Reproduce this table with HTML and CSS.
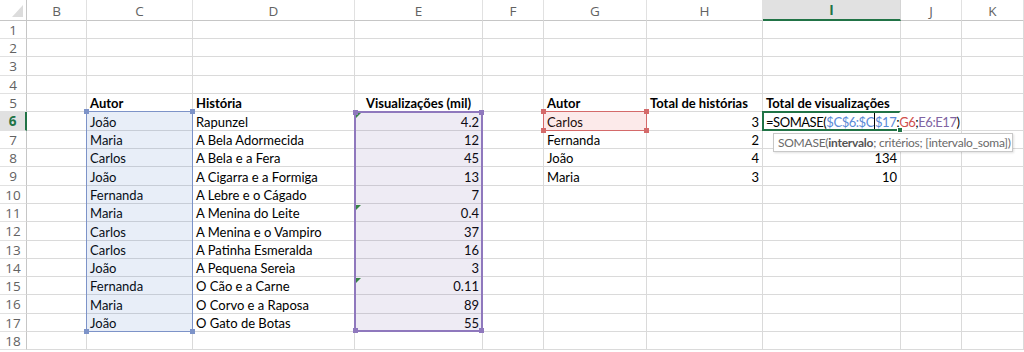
FILE: index.html
```html
<!DOCTYPE html>
<html lang="pt">
<head>
<meta charset="utf-8">
<title>SOMASE</title>
<link rel="stylesheet" href="styles.css">
</head>
<body>
<div class="sheet">
  <!-- header row -->
  <div class="corner"><span class="corner-tri"></span></div>
  <div class="ch">B</div><div class="ch">C</div><div class="ch">D</div><div class="ch">E</div><div class="ch">F</div><div class="ch">G</div><div class="ch">H</div><div class="ch ch-active">I</div><div class="ch">J</div><div class="ch">K</div>

  <!-- row 1 -->
  <div class="rh">1</div><div class="c"></div><div class="c"></div><div class="c"></div><div class="c"></div><div class="c"></div><div class="c"></div><div class="c"></div><div class="c"></div><div class="c"></div><div class="c"></div>
  <!-- row 2 -->
  <div class="rh">2</div><div class="c"></div><div class="c"></div><div class="c"></div><div class="c"></div><div class="c"></div><div class="c"></div><div class="c"></div><div class="c"></div><div class="c"></div><div class="c"></div>
  <!-- row 3 -->
  <div class="rh">3</div><div class="c"></div><div class="c"></div><div class="c"></div><div class="c"></div><div class="c"></div><div class="c"></div><div class="c"></div><div class="c"></div><div class="c"></div><div class="c"></div>
  <!-- row 4 -->
  <div class="rh">4</div><div class="c"></div><div class="c"></div><div class="c"></div><div class="c"></div><div class="c"></div><div class="c"></div><div class="c"></div><div class="c"></div><div class="c"></div><div class="c"></div>
  <!-- row 5 -->
  <div class="rh">5</div><div class="c"></div><div class="c b">Autor</div><div class="c b">História</div><div class="c b ctr">Visualizações (mil)</div><div class="c"></div><div class="c b">Autor</div><div class="c b">Total de histórias</div><div class="c b">Total de visualizações</div><div class="c"></div><div class="c"></div>
  <!-- row 6 -->
  <div class="rh rh-active">6</div><div class="c"></div><div class="c">João</div><div class="c">Rapunzel</div><div class="c n"><span class="err"></span>4.2</div><div class="c"></div><div class="c">Carlos</div><div class="c n">3</div><div class="c formula">=SOMASE(<span class="ref-c">$C$6:$C</span><span class="caret"></span><span class="ref-c">$17</span>;<span class="ref-g">G6</span>;<span class="ref-e">E6:E17</span>)</div><div class="c"></div><div class="c"></div>
  <!-- row 7 -->
  <div class="rh">7</div><div class="c"></div><div class="c">Maria</div><div class="c">A Bela Adormecida</div><div class="c n">12</div><div class="c"></div><div class="c">Fernanda</div><div class="c n">2</div><div class="c"></div><div class="c"></div><div class="c"></div>
  <!-- row 8 -->
  <div class="rh">8</div><div class="c"></div><div class="c">Carlos</div><div class="c">A Bela e a Fera</div><div class="c n">45</div><div class="c"></div><div class="c">João</div><div class="c n">4</div><div class="c n">134</div><div class="c"></div><div class="c"></div>
  <!-- row 9 -->
  <div class="rh">9</div><div class="c"></div><div class="c">João</div><div class="c">A Cigarra e a Formiga</div><div class="c n">13</div><div class="c"></div><div class="c">Maria</div><div class="c n">3</div><div class="c n">10</div><div class="c"></div><div class="c"></div>
  <!-- row 10 -->
  <div class="rh">10</div><div class="c"></div><div class="c">Fernanda</div><div class="c">A Lebre e o Cágado</div><div class="c n">7</div><div class="c"></div><div class="c"></div><div class="c"></div><div class="c"></div><div class="c"></div><div class="c"></div>
  <!-- row 11 -->
  <div class="rh">11</div><div class="c"></div><div class="c">Maria</div><div class="c">A Menina do Leite</div><div class="c n"><span class="err"></span>0.4</div><div class="c"></div><div class="c"></div><div class="c"></div><div class="c"></div><div class="c"></div><div class="c"></div>
  <!-- row 12 -->
  <div class="rh">12</div><div class="c"></div><div class="c">Carlos</div><div class="c">A Menina e o Vampiro</div><div class="c n">37</div><div class="c"></div><div class="c"></div><div class="c"></div><div class="c"></div><div class="c"></div><div class="c"></div>
  <!-- row 13 -->
  <div class="rh">13</div><div class="c"></div><div class="c">Carlos</div><div class="c">A Patinha Esmeralda</div><div class="c n">16</div><div class="c"></div><div class="c"></div><div class="c"></div><div class="c"></div><div class="c"></div><div class="c"></div>
  <!-- row 14 -->
  <div class="rh">14</div><div class="c"></div><div class="c">João</div><div class="c">A Pequena Sereia</div><div class="c n">3</div><div class="c"></div><div class="c"></div><div class="c"></div><div class="c"></div><div class="c"></div><div class="c"></div>
  <!-- row 15 -->
  <div class="rh">15</div><div class="c"></div><div class="c">Fernanda</div><div class="c">O Cão e a Carne</div><div class="c n"><span class="err"></span>0.11</div><div class="c"></div><div class="c"></div><div class="c"></div><div class="c"></div><div class="c"></div><div class="c"></div>
  <!-- row 16 -->
  <div class="rh">16</div><div class="c"></div><div class="c">Maria</div><div class="c">O Corvo e a Raposa</div><div class="c n">89</div><div class="c"></div><div class="c"></div><div class="c"></div><div class="c"></div><div class="c"></div><div class="c"></div>
  <!-- row 17 -->
  <div class="rh">17</div><div class="c"></div><div class="c">João</div><div class="c">O Gato de Botas</div><div class="c n">55</div><div class="c"></div><div class="c"></div><div class="c"></div><div class="c"></div><div class="c"></div><div class="c"></div>
  <!-- row 18 -->
  <div class="rh">18</div><div class="c"></div><div class="c"></div><div class="c"></div><div class="c"></div><div class="c"></div><div class="c"></div><div class="c"></div><div class="c"></div><div class="c"></div><div class="c"></div>

  <!-- range highlights (overlays) -->
  <div class="range range-c"><i class="h tl"></i><i class="h tr"></i><i class="h bl"></i><i class="h br"></i></div>
  <div class="range range-e"><i class="h tl"></i><i class="h tr"></i><i class="h bl"></i><i class="h br"></i></div>
  <div class="range range-g"><i class="h tl"></i><i class="h tr"></i><i class="h bl"></i><i class="h br"></i></div>
  <div class="active-cell"><i class="fh"></i></div>

  <div class="tooltip">SOMASE(<b>intervalo</b>; critérios; [intervalo_soma])</div>
</div>
</body>
</html>
```

FILE: styles.css
```css
* { box-sizing: border-box; }

html, body {
  margin: 0;
  padding: 0;
  background: #ffffff;
}

body {
  font-family: Lato, "Open Sans", "Liberation Sans", sans-serif;
  font-size: 13px;
  color: #000;
  overflow: hidden;
  width: 1024px;
  height: 352px;
}

.sheet {
  position: relative;
  display: grid;
  grid-template-columns: 27px 60px 106px 162px 128px 61px 103px 116px 138px 61px 62px;
  grid-template-rows: 21px 18px 18px 19px 18px 18px 19px 18px 18px 19px 18px 18px 19px 18px 18px 18px 19px 18px 18px;
}

/* headers */
.corner {
  position: relative;
  border-right: 1px solid #c6c6c6;
  border-bottom: 1px solid #c6c6c6;
}
.corner-tri {
  position: absolute;
  right: 3px;
  bottom: 3px;
  width: 0;
  height: 0;
  border-left: 11px solid transparent;
  border-bottom: 12px solid #dcdcdc;
}

.ch {
  display: flex;
  align-items: center;
  justify-content: center;
  color: #626262;
  font-family: "Open Sans", Lato, sans-serif;
  font-size: 13.5px;
  border-right: 1px solid #e1e1e1;
  border-bottom: 1px solid #c6c6c6;
  padding-top: 1px;
}
.ch-active {
  background: #e1e1e1;
  color: #217346;
  font-weight: 700;
  border-bottom: 2px solid #217346;
  border-right-color: #d4d4d4;
}

.rh {
  display: flex;
  align-items: center;
  justify-content: center;
  color: #626262;
  font-family: "Open Sans", Lato, sans-serif;
  font-size: 13.5px;
  border-right: 1px solid #c6c6c6;
  border-bottom: 1px solid #e1e1e1;
}
.rh-active {
  background: #e1e1e1;
  color: #217346;
  font-weight: 700;
  border-right: 2px solid #217346;
}

/* cells */
.c {
  display: flex;
  align-items: center;
  padding: 1px 3px 0 3px;
  border-right: 1px solid #dadada;
  border-bottom: 1px solid #dadada;
  white-space: nowrap;
  position: relative;
  min-width: 0;
}
.b { font-weight: 700; }
.ctr { justify-content: center; }
.n { justify-content: flex-end; }

.err {
  position: absolute;
  left: 1px;
  top: 1px;
  width: 0;
  height: 0;
  border-top: 5px solid #2f8a3a;
  border-right: 5px solid transparent;
}

.formula {
  overflow: visible;
  z-index: 3;
  letter-spacing: -0.45px;
  border-right-color: transparent;
}
.ref-c { color: #5b8ad6; }
.ref-g { color: #d0504d; }
.ref-e { color: #8064a2; }
.caret {
  display: inline-block;
  width: 0;
  height: 17px;
  border-left: 1px solid #000;
  vertical-align: middle;
}

/* range highlights: overlays drawn over the cells */
.range {
  position: absolute;
  top: -1px;
  left: -1px;
  right: 0;
  bottom: 0;
  z-index: 2;
  pointer-events: none;
}
.range-c {
  grid-column: 3 / 4;
  grid-row: 7 / 19;
  border: 1px solid #7d93c8;
  background: rgba(68, 114, 196, 0.12);
}
.range-e {
  grid-column: 5 / 6;
  grid-row: 7 / 19;
  border: 2px solid #8f78bd;
  background: rgba(112, 88, 168, 0.12);
}
.range-g {
  grid-column: 7 / 8;
  grid-row: 7 / 8;
  border: 1px solid #d46a6a;
  background: rgba(230, 90, 90, 0.13);
}
.h {
  position: absolute;
  width: 5px;
  height: 5px;
}
.range-c .h { background: #7d93c8; }
.range-e .h { background: #8f78bd; }
.range-g .h { background: #d46a6a; }
.tl { left: -3px; top: -3px; }
.tr { right: -3px; top: -3px; }
.bl { left: -3px; bottom: -3px; }
.br { right: -3px; bottom: -3px; }

.active-cell {
  position: absolute;
  grid-column: 9 / 10;
  grid-row: 7 / 8;
  top: -1px;
  left: -1px;
  right: 0;
  bottom: 0;
  border: 2px solid #217346;
  border-right-color: transparent;
  z-index: 4;
  pointer-events: none;
}
.fh {
  position: absolute;
  right: -4px;
  bottom: -4px;
  width: 6px;
  height: 6px;
  background: #217346;
  border: 1px solid #fff;
}

.tooltip {
  position: absolute;
  grid-column: 9 / 12;
  grid-row: 8 / 9;
  top: 2px;
  left: 10px;
  width: 240px;
  height: 19px;
  background: #ffffff;
  border: 1px solid #c8c8c8;
  box-shadow: 1px 1px 2px rgba(0,0,0,0.12);
  color: #6a6a6a;
  font-size: 12px;
  letter-spacing: -0.25px;
  padding: 0 4px;
  display: flex;
  align-items: center;
  white-space: nowrap;
  z-index: 5;
}
.tooltip b { font-weight: 700; color: #555; }
```
